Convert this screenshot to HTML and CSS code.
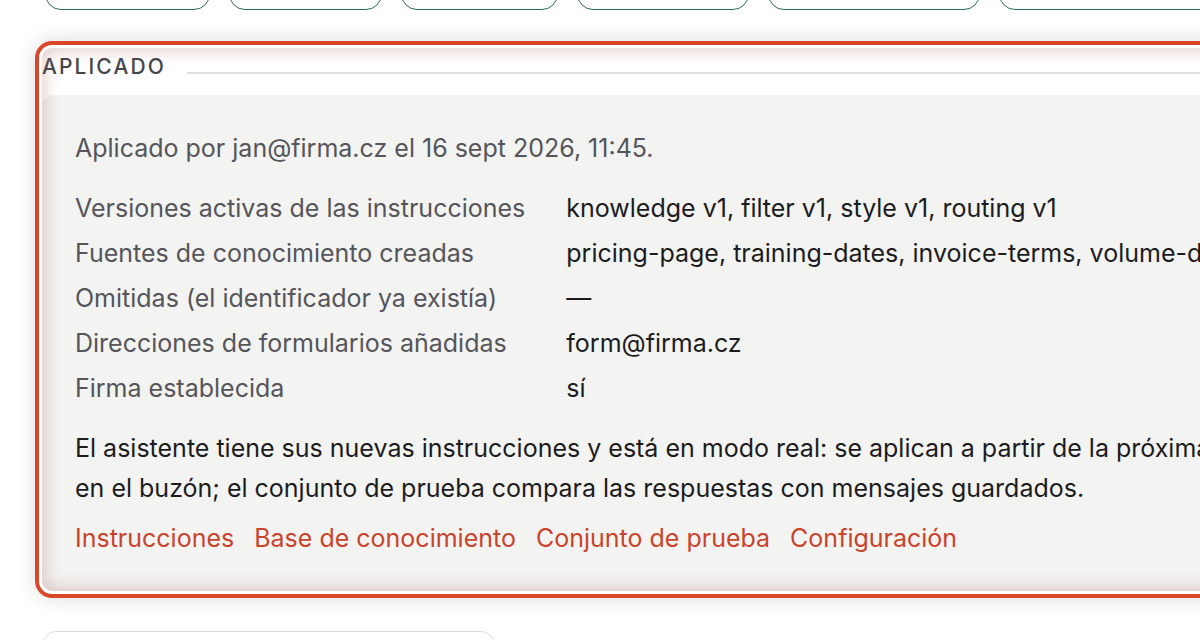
FILE: index.html
```html
<!DOCTYPE html>
<html lang="es">
<head>
<meta charset="utf-8">
<title>Aplicado</title>
<link rel="stylesheet" href="styles.css">
</head>
<body>
<div class="page">
  <nav class="tabs" aria-label="Secciones">
    <a class="tab t1" href="#" aria-label="Resumen"></a>
    <a class="tab t2" href="#" aria-label="Buzón"></a>
    <a class="tab t3" href="#" aria-label="Borradores"></a>
    <a class="tab t4" href="#" aria-label="Instrucciones"></a>
    <a class="tab t5" href="#" aria-label="Base de conocimiento"></a>
    <a class="tab t6" href="#" aria-label="Conjunto de prueba"></a>
  </nav>

  <section class="applied">
    <h2 class="section-title">Aplicado</h2>
    <div class="card">
      <p class="intro">Aplicado por jan@firma.cz el 16 sept 2026, 11:45.</p>
      <dl class="facts">
        <dt>Versiones activas de las instrucciones</dt>
        <dd>knowledge v1, filter v1, style v1, routing v1</dd>
        <dt>Fuentes de conocimiento creadas</dt>
        <dd>pricing-page, training-dates, invoice-terms, volume-discounts</dd>
        <dt>Omitidas (el identificador ya existía)</dt>
        <dd>—</dd>
        <dt>Direcciones de formularios añadidas</dt>
        <dd>form@firma.cz</dd>
        <dt>Firma establecida</dt>
        <dd>sí</dd>
      </dl>
      <p class="note">El asistente tiene sus nuevas instrucciones y está en modo real: se aplican a partir de la próxima respuesta en el buzón; el conjunto de prueba compara las respuestas con mensajes guardados.</p>
      <div class="links">
        <a href="#">Instrucciones</a>
        <a href="#">Base de conocimiento</a>
        <a href="#">Conjunto de prueba</a>
        <a href="#">Configuración</a>
      </div>
    </div>
  </section>

  <section class="next-card"></section>
</div>
</body>
</html>
```

FILE: styles.css
```css
html, body {
  margin: 0;
  padding: 0;
  background: #ffffff;
  overflow: hidden;
}

body {
  font-family: Inter, "Noto Sans", "Liberation Sans", sans-serif;
  color: #1c1c1f;
}

.page {
  width: 1380px;
  padding-left: 42px;
  box-sizing: border-box;
}

.tabs {
  display: flex;
  gap: 19px;
  margin-top: -32px;
  margin-left: 3px;
}

.tab {
  display: block;
  height: 42px;
  box-sizing: border-box;
  border: 1.5px solid #2b6e55;
  border-radius: 16px;
}

.t1 { width: 165px; }
.t2 { width: 153px; }
.t3 { width: 157px; }
.t4 { width: 172px; }
.t5 { width: 212px; }
.t6 { width: 230px; }

.applied {
  position: relative;
  margin-top: 38px;
  border-radius: 10px;
  background: #ffffff;
  box-shadow:
    0 0 0 3px #ffffff,
    0 0 0 7px #d9472b,
    0 0 22px 6px rgba(0, 0, 0, 0.16);
}

.applied::after {
  content: "";
  position: absolute;
  inset: 0;
  border-radius: 10px;
  pointer-events: none;
  box-shadow: inset 0 0 16px 3px rgba(150, 80, 70, 0.28);
}

.section-title {
  display: flex;
  align-items: baseline;
  gap: 21px;
  margin: 0 0 13px;
  padding-top: 3px;
  font-size: 21px;
  line-height: 31px;
  font-weight: 500;
  letter-spacing: 0.1em;
  text-transform: uppercase;
  color: #45464d;
}

.section-title::after {
  content: "";
  flex: 1;
  height: 2px;
  background: #dedede;
}

.card {
  background: #f3f3f1;
  border-radius: 12px;
  padding: 33px 33px 33px;
  font-size: 25px;
  line-height: 40px;
}

.intro {
  margin: 0;
  color: #55555b;
}

.facts {
  display: grid;
  grid-template-columns: max-content 1fr;
  column-gap: 41px;
  row-gap: 5px;
  margin: 20px 0 0;
}

.facts dt {
  color: #55555b;
}

.facts dd {
  margin: 0;
  color: #1c1c1f;
  white-space: nowrap;
}

.note {
  margin: 20px 0 0;
  color: #1c1c1f;
}

.links {
  display: flex;
  gap: 20px;
  margin-top: 10px;
}

.links a {
  color: #c9442b;
  text-decoration: none;
}

.next-card {
  margin-top: 40px;
  width: 453px;
  height: 60px;
  box-sizing: border-box;
  border: 1.5px solid #dcdcdc;
  border-radius: 14px;
  background: #ffffff;
}
```
